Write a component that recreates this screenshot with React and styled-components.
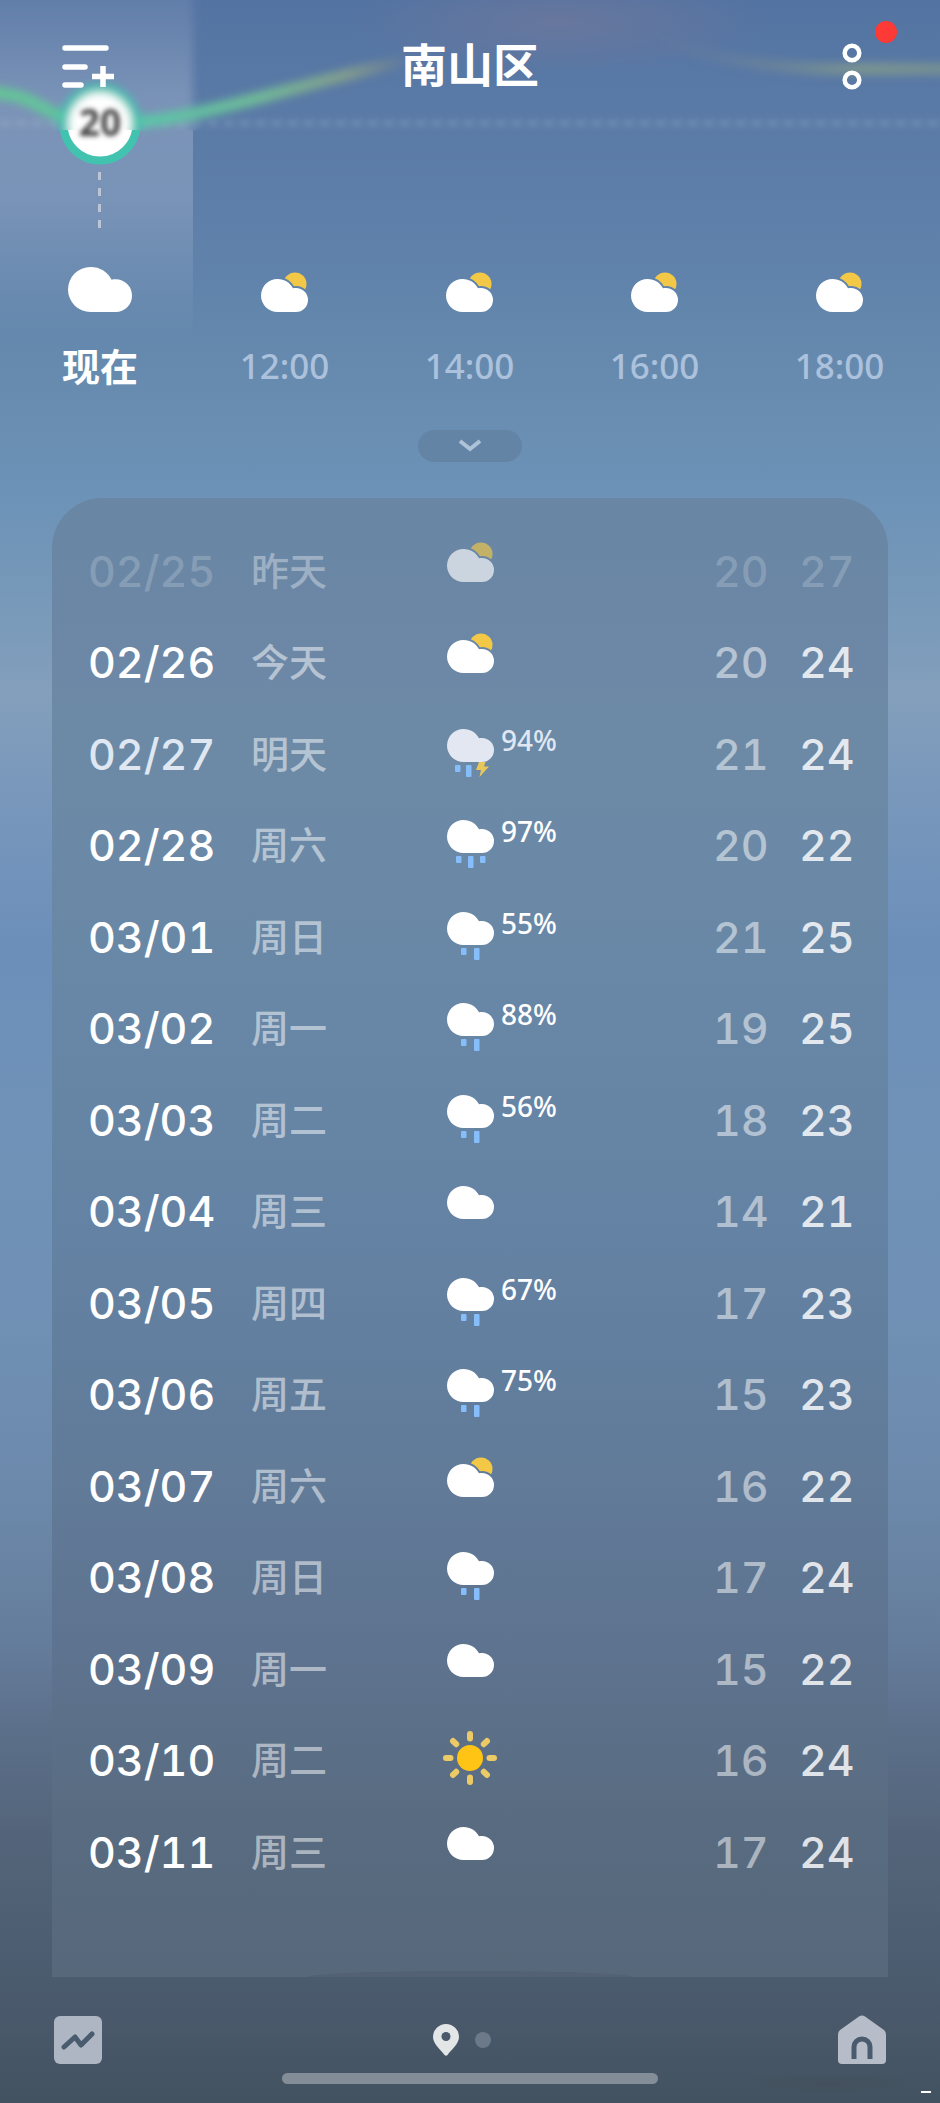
import React, { useId } from 'react';
import styled, { createGlobalStyle } from 'styled-components';

const GlobalStyle = createGlobalStyle`
  * {
    box-sizing: border-box;
  }
  body {
    margin: 0;
    background: #43525f;
  }
`

const Page = styled.div`
  position: relative;
  display: flex;
  flex-direction: column;
  min-height: 100vh;
  overflow: hidden;
  color: white;
  font-family: 'Noto Sans', 'Noto Sans CJK SC', sans-serif;
  background: linear-gradient(
    180deg,
    #5373a2 0%,
    #5b7ba7 6%,
    #5f81aa 12%,
    #678baf 18%,
    #6d93b8 24%,
    #7497b8 27%,
    #839fbc 33%,
    #7897bb 38%,
    #6c8fba 45%,
    #7092b8 53%,
    #7091b5 62%,
    #6c89ab 71%,
    #657d9c 78%,
    #5c708b 82%,
    #54657b 87%,
    #4e5e72 92%,
    #49596b 96%,
    #435260 100%
  );
`

const TrendChart = styled.svg`
  position: absolute;
  top: 0;
  left: 0;
  width: 100%;
  height: 340px;
  pointer-events: none;
`

const TopBar = styled.header`
  position: relative;
  display: grid;
  grid-template-columns: 1fr auto 1fr;
  align-items: center;
  height: 132px;
  padding: 0 62px;
`

const City = styled.h1`
  margin: 0;
  padding-bottom: 8px;
  font-family: 'Noto Sans CJK SC', sans-serif;
  font-size: 46px;
  line-height: 60px;
  font-weight: 700;
`

const IconButton = styled.button`
  position: relative;
  display: flex;
  justify-self: ${props => props.$end ? 'end' : 'start'};
  padding: 0;
  border: 0;
  background: none;
  color: inherit;
  cursor: pointer;
`

const MoreButton = styled(IconButton)`
  margin-right: 16px;
`

const Badge = styled.span`
  position: absolute;
  top: -21px;
  right: -35px;
  width: 22px;
  height: 22px;
  border-radius: 50%;
  background: #fd3a35;
`

const Hours = styled.ul`
  position: relative;
  display: grid;
  grid-template-columns: 192px repeat(4, 1fr);
  margin: 0;
  padding: 132px 8px 0 0;
  list-style: none;
`

const Hour = styled.li`
  display: flex;
  flex-direction: column;
  align-items: center;
  padding-left: ${props => props.$now ? '8px' : '0'};
  color: ${props => props.$now ? 'white' : '#abc1dc'};
  font-size: ${props => props.$now ? '38px' : '35px'};
  font-weight: ${props => props.$now ? 700 : 500};
  line-height: 52px;
`

const HourIcon = styled.div`
  display: flex;
  align-items: flex-end;
  height: 48px;
  margin-bottom: 28px;
`

const ExpandButton = styled.button`
  display: flex;
  align-items: center;
  justify-content: center;
  align-self: center;
  width: 104px;
  height: 32px;
  margin: 38px 0 36px;
  padding: 0;
  border: 0;
  border-radius: 16px;
  background: #6484a6;
  color: #afc3d8;
  cursor: pointer;
`

const Panel = styled.section`
  flex: 1;
  display: flex;
  flex-direction: column;
  justify-content: space-between;
  margin: 0 52px;
  padding: 26px 36px 0;
  border-radius: 50px 50px 0 0;
  background: linear-gradient(
    180deg,
    #6986a5 0%,
    #6c87a6 8%,
    #6c8aa6 18%,
    #6887a6 35%,
    #6482a3 50%,
    #617b99 66%,
    #5e738f 78%,
    #586b80 90%,
    #58687b 100%
  );
`

const Days = styled.table`
  width: 100%;
  table-layout: fixed;
  border-collapse: collapse;
  font-family: 'Inter', sans-serif;
  font-size: 43px;
  font-variant-numeric: tabular-nums;
  line-height: 52px;
`

const Day = styled.tr`
  height: 91px;
  color: ${props => props.$tone === 'past' ? 'rgba(255, 255, 255, 0.2)'
    : props.$tone === 'soft' ? '#dfe7f3' : 'white'};

  &:nth-child(even) {
    height: 92px;
  }

  th, td {
    padding: 2px 0 0;
    text-align: left;
    vertical-align: middle;
    font-weight: 500;
    white-space: nowrap;
  }
`

const DateCell = styled.th`
  width: 163px;
`

const WeekdayCell = styled.td`
  width: 190px;
  color: ${props => props.$past ? 'rgba(255, 255, 255, 0.36)' : 'rgba(255, 255, 255, 0.5)'};
  font-family: 'Noto Sans CJK SC', sans-serif;
  font-size: 38px;

  && {
    padding: 0 0 2px;
  }
`

const Weather = styled.div`
  display: flex;
  height: 60px;
  opacity: ${props => props.$past ? 0.65 : 1};
`

const Chance = styled.span`
  font-family: 'Noto Sans', sans-serif;
  font-size: 28px;
  font-weight: 500;
  line-height: 32px;
`

const LowCell = styled.td`
  width: 86px;
  color: ${props => props.$past ? 'inherit' : 'rgba(255, 255, 255, 0.5)'};
`

const HighCell = styled.td`
  width: 53px;
  color: ${props => props.$past ? 'inherit' : 'rgba(255, 255, 255, 0.82)'};
`

const NextCardEdge = styled.div`
  align-self: center;
  width: 324px;
  height: 6px;
  border-radius: 162px 162px 0 0 / 6px 6px 0 0;
  background: #526174;
`

const BottomBar = styled.nav`
  display: grid;
  grid-template-columns: 1fr auto 1fr;
  align-items: center;
  height: 96px;
  padding: 38px 54px 8px;
`

const Places = styled.div`
  display: flex;
  align-items: center;
  gap: 16px;
  padding-right: 16px;
`

const PlaceDot = styled.span`
  width: 16px;
  height: 16px;
  border-radius: 50%;
  background: #6b7988;
`

const GestureArea = styled.div`
  display: grid;
  grid-template-columns: 1fr 376px 1fr;
  align-items: start;
  height: 30px;
`

const GestureBar = styled.div`
  grid-column: 2;
  height: 11px;
  border-radius: 6px;
  background: #838d98;
`

const Corner = styled.div`
  display: flex;
  justify-content: flex-end;
  align-items: flex-end;
  height: 20px;
  padding: 0 9px 0 80px;
`

const Smudge = styled.div`
  flex: 1;
  height: 20px;
  background: radial-gradient(closest-side, rgba(66, 76, 84, 0.45), rgba(66, 76, 84, 0));
`

const Dash = styled.span`
  width: 10px;
  height: 2px;
  background: white;
`

const CLOUD = 'M16.5 0 C23.500 0 29 3.500 32 9.300 C33 9 34 9 35 9 A12 12 0 0 1 35 33 H16.500 A16.500 16.500 0 0 1 16.500 0Z'

const DROPS = {
  rain: [[14, 7], [27, 12]],
  heavy: [[9, 7], [21, 12], [33, 7]],
  storm: [[8, 7], [19, 12]],
}

function CloudWithSun() {
  const id = useId()
  return (
    <g>
      <mask id={id}>
        <rect x="-10" y="-20" width="80" height="70" fill="white" />
        <path d={CLOUD} fill="black" stroke="black" strokeWidth="4" />
      </mask>
      <circle cx="34" cy="5" r="11.500" fill="#f3c846" mask={`url(#${id})`} />
      <path d={CLOUD} fill="white" />
    </g>
  )
}

function SunIcon() {
  return (
    <g>
      <circle cx="29" cy="28" r="13" fill="#ffc414" />
      {[0, 45, 90, 135, 180, 225, 270, 315].map(angle => (
        <path
          key={angle}
          d="M29 8.500 V4"
          stroke="#ecca66"
          strokeWidth="6"
          strokeLinecap="round"
          transform={`rotate(${angle} 29 28)`}
        />
      ))}
    </g>
  )
}

function WeatherIcon({ kind }) {
  return (
    <svg width="60" height="60" viewBox="0 0 60 60" aria-hidden="true">
      {kind === 'sun' && <SunIcon />}
      {kind === 'partly' && <g transform="translate(6 8)"><CloudWithSun /></g>}
      {kind !== 'sun' && kind !== 'partly' && (
        <g transform="translate(6 5)">
          <path d={CLOUD} fill={kind === 'storm' ? '#e2e7f1' : 'white'} />
          {(DROPS[kind] || []).map(([x, h]) => (
            <rect key={x} x={x} y="36" width="5.500" height={h} rx="1" fill="#86befb" />
          ))}
          {kind === 'storm' && <path d="M32 33 H38.500 L37 37.500 H42 L32.500 48 L34 41 H29Z" fill="#e8c75a" />}
        </g>
      )}
    </svg>
  )
}

function Trend() {
  const curve = 'M-10 93 C40 92 45 123 100 124 C190 124 260 94 400 62 C470 40 510 14 560 18 C640 28 700 67 830 69 L2000 70'
  return (
    <TrendChart viewBox="0 0 940 340" preserveAspectRatio="xMinYMin slice" aria-hidden="true">
      <defs>
        <linearGradient id="nowFill" gradientUnits="userSpaceOnUse" x1="0" y1="0" x2="0" y2="336">
          <stop offset="0" stopColor="#c8cfe0" stopOpacity="0.12" />
          <stop offset="0.3" stopColor="#c8cfe0" stopOpacity="0.3" />
          <stop offset="0.6" stopColor="#c8cfe0" stopOpacity="0.26" />
          <stop offset="1" stopColor="#c8cfe0" stopOpacity="0" />
        </linearGradient>
        <linearGradient id="curveFill" gradientUnits="userSpaceOnUse" x1="0" y1="0" x2="940" y2="0">
          <stop offset="0" stopColor="#65c596" />
          <stop offset="0.16" stopColor="#5ac6a6" />
          <stop offset="0.28" stopColor="#72bb97" />
          <stop offset="0.37" stopColor="#8da688" stopOpacity="0.8" />
          <stop offset="0.43" stopColor="#94967f" stopOpacity="0.1" />
          <stop offset="0.47" stopColor="#8c8590" stopOpacity="0" />
          <stop offset="0.7" stopColor="#8c8590" stopOpacity="0" />
          <stop offset="0.84" stopColor="#86988a" stopOpacity="0.4" />
          <stop offset="0.92" stopColor="#829b8d" stopOpacity="0.85" />
          <stop offset="1" stopColor="#7d968f" stopOpacity="0.8" />
        </linearGradient>
        <radialGradient id="haze">
          <stop offset="0" stopColor="#807a96" stopOpacity="0.45" />
          <stop offset="1" stopColor="#807a96" stopOpacity="0" />
        </radialGradient>
        <filter id="soft" x="-20%" y="-50%" width="140%" height="200%">
          <feGaussianBlur stdDeviation="4" />
        </filter>
        <filter id="softDots" filterUnits="userSpaceOnUse" x="0" y="100" width="2000" height="46">
          <feGaussianBlur stdDeviation="3" />
        </filter>
        <filter id="softText" x="-30%" y="-30%" width="160%" height="160%">
          <feGaussianBlur stdDeviation="2.500" />
        </filter>
        <clipPath id="above"><rect width="2000" height="130" /></clipPath>
        <clipPath id="below"><rect y="130" width="2000" height="220" /></clipPath>
      </defs>
      <g clipPath="url(#above)">
        <rect x="-20" y="-20" width="213" height="376" fill="url(#nowFill)" filter="url(#soft)" />
        <ellipse cx="560" cy="22" rx="210" ry="54" fill="url(#haze)" />
      </g>
      <g clipPath="url(#below)">
        <rect width="193" height="340" fill="url(#nowFill)" />
      </g>
      <path d="M0 123 H2000" stroke="#c3d3e8" strokeOpacity="0.2" strokeWidth="6" strokeDasharray="10 6" filter="url(#softDots)" />
      <path d={curve} fill="none" stroke="url(#curveFill)" strokeWidth="12" filter="url(#soft)" />
      <circle cx="100" cy="124" r="36.500" fill="white" stroke="#42c3b0" strokeWidth="8" clipPath="url(#below)" />
      <g clipPath="url(#above)">
        <circle cx="100" cy="124" r="36" fill="white" stroke="#42c3b0" strokeWidth="9" filter="url(#soft)" />
      </g>
      <text x="100" y="136" textAnchor="middle" fontSize="37" fontWeight="700" fill="#444444" filter="url(#softText)">20</text>
      <path d="M99.500 172 V229" stroke="#bcc5d6" strokeWidth="3" strokeDasharray="8 8" />
    </TrendChart>
  )
}

const hours = [
  { time: '现在', now: true },
  { time: '12:00' },
  { time: '14:00' },
  { time: '16:00' },
  { time: '18:00' },
]

const days = [
  { date: '02/25', weekday: '昨天', icon: 'partly', low: 20, high: 27, tone: 'past' },
  { date: '02/26', weekday: '今天', icon: 'partly', low: 20, high: 24 },
  { date: '02/27', weekday: '明天', icon: 'storm', chance: 94, low: 21, high: 24, tone: 'soft' },
  { date: '02/28', weekday: '周六', icon: 'heavy', chance: 97, low: 20, high: 22 },
  { date: '03/01', weekday: '周日', icon: 'rain', chance: 55, low: 21, high: 25 },
  { date: '03/02', weekday: '周一', icon: 'rain', chance: 88, low: 19, high: 25 },
  { date: '03/03', weekday: '周二', icon: 'rain', chance: 56, low: 18, high: 23 },
  { date: '03/04', weekday: '周三', icon: 'cloud', low: 14, high: 21 },
  { date: '03/05', weekday: '周四', icon: 'rain', chance: 67, low: 17, high: 23 },
  { date: '03/06', weekday: '周五', icon: 'rain', chance: 75, low: 15, high: 23 },
  { date: '03/07', weekday: '周六', icon: 'partly', low: 16, high: 22 },
  { date: '03/08', weekday: '周日', icon: 'rain', low: 17, high: 24 },
  { date: '03/09', weekday: '周一', icon: 'cloud', low: 15, high: 22 },
  { date: '03/10', weekday: '周二', icon: 'sun', low: 16, high: 24 },
  { date: '03/11', weekday: '周三', icon: 'cloud', low: 17, high: 24 },
]

function Header() {
  return (
    <TopBar>
      <IconButton aria-label="城市管理">
        <svg width="54" height="44" viewBox="0 0 54 44" fill="none" stroke="white" strokeWidth="5.500">
          <path d="M3 4 H44 M3 23 H23 M3 41 H19" strokeLinecap="round" />
          <path d="M41 22 V43 M30 32.500 H52" />
        </svg>
      </IconButton>
      <City>南山区</City>
      <MoreButton $end aria-label="更多">
        <svg width="20" height="48" viewBox="0 0 20 48" fill="none" stroke="white" strokeWidth="4.500">
          <circle cx="10" cy="11" r="7.300" />
          <circle cx="10" cy="38" r="7.300" />
        </svg>
        <Badge />
      </MoreButton>
    </TopBar>
  )
}

function Hourly() {
  return (
    <Hours>
      {hours.map(hour => (
        <Hour key={hour.time} $now={hour.now}>
          <HourIcon>
            {hour.now ? (
              <svg width="64" height="45" viewBox="0 0 47 33" aria-hidden="true">
                <path d={CLOUD} fill="white" />
              </svg>
            ) : (
              <svg width="48" height="41" viewBox="0 -8 48 41" aria-hidden="true">
                <CloudWithSun />
              </svg>
            )}
          </HourIcon>
          {hour.time}
        </Hour>
      ))}
    </Hours>
  )
}

function Daily() {
  return (
    <Panel>
      <Days>
        <tbody>
          {days.map(day => {
            const past = day.tone === 'past'
            return (
              <Day key={day.date} $tone={day.tone}>
                <DateCell scope="row">{day.date}</DateCell>
                <WeekdayCell $past={past}>{day.weekday}</WeekdayCell>
                <td>
                  <Weather $past={past}>
                    <WeatherIcon kind={day.icon} />
                    {day.chance && <Chance>{day.chance}%</Chance>}
                  </Weather>
                </td>
                <LowCell $past={past}>{day.low}</LowCell>
                <HighCell $past={past}>{day.high}</HighCell>
              </Day>
            )
          })}
        </tbody>
      </Days>
      <NextCardEdge />
    </Panel>
  )
}

function Footer() {
  return (
    <footer>
      <BottomBar>
        <IconButton aria-label="趋势">
          <svg width="48" height="48" viewBox="0 0 48 48">
            <rect width="48" height="48" rx="6" fill="#adb6c2" />
            <path d="M10 31 L21 21 L27 29 L38 18" fill="none" stroke="#495b6e" strokeWidth="5" strokeLinecap="round" strokeLinejoin="round" />
          </svg>
        </IconButton>
        <Places>
          <svg width="26" height="32" viewBox="0 0 26 32" aria-hidden="true">
            <path d="M13 0 A13 13 0 0 1 26 13 C26 20 18 26 14.500 31 Q13 32.500 11.500 31 C8 26 0 20 0 13 A13 13 0 0 1 13 0Z" fill="#e3e6e7" />
            <circle cx="13" cy="12.500" r="4.500" fill="#4a5a6c" />
          </svg>
          <PlaceDot />
        </Places>
        <IconButton $end aria-label="首页">
          <svg width="48" height="50" viewBox="0 0 48 50">
            <path d="M21 1.500 Q24 -0.500 27 1.500 L46 15 Q48 17 48 20 V45 Q48 49 44 49 H4 Q0 49 0 45 V20 Q0 17 2 15Z" fill="#b6bdc8" />
            <path d="M16 44 V32 A8 8 0 0 1 32 32 V44" fill="none" stroke="#4a5b6e" strokeWidth="5" />
          </svg>
        </IconButton>
      </BottomBar>
      <GestureArea>
        <GestureBar />
        <Corner>
          <Smudge />
          <Dash />
        </Corner>
      </GestureArea>
    </footer>
  )
}

function App() {
  return (
    <Page>
      <GlobalStyle />
      <Trend />
      <Header />
      <Hourly />
      <ExpandButton aria-label="展开">
        <svg width="24" height="14" viewBox="0 0 24 14" fill="none" stroke="currentColor" strokeWidth="4">
          <path d="M2 2 L12 10 L22 2" />
        </svg>
      </ExpandButton>
      <Daily />
      <Footer />
    </Page>
  )
}

export default App
